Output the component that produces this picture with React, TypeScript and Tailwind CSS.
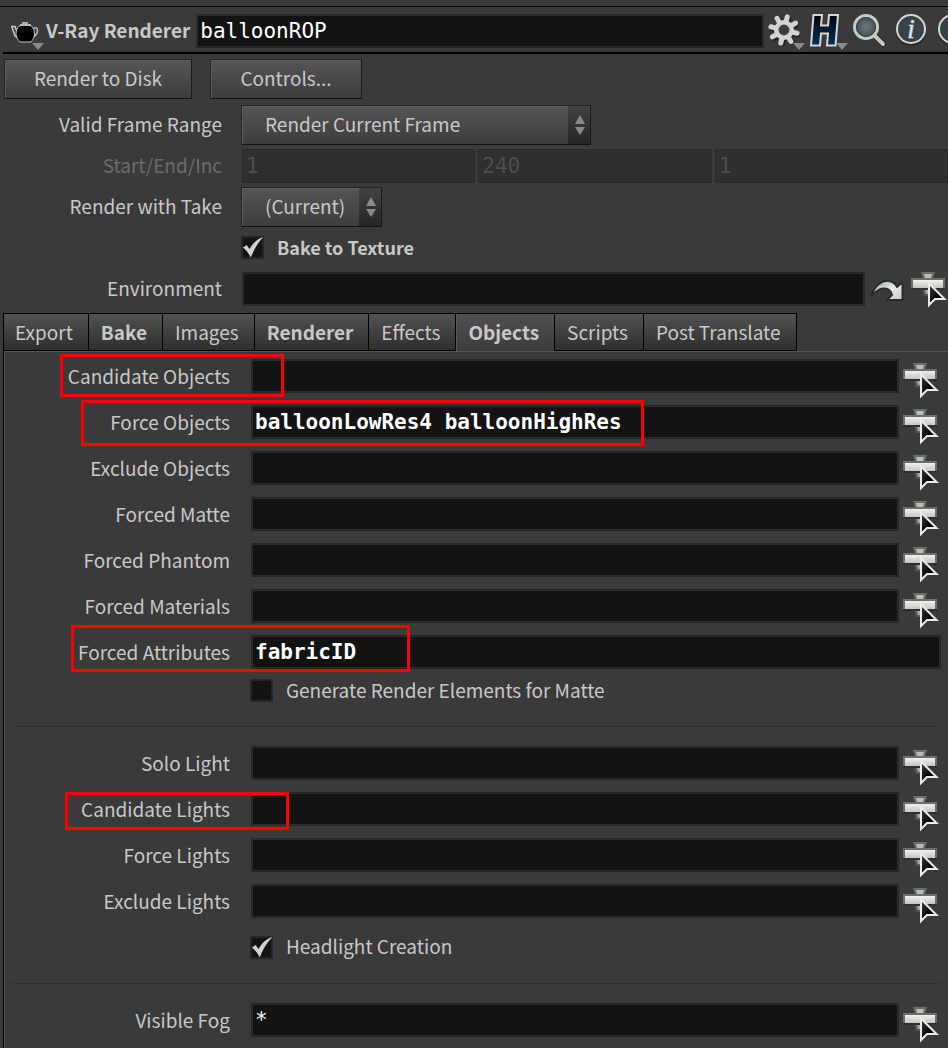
import { useId, useState } from "react";
import type { ReactNode } from "react";

const mono = "font-['DejaVu_Sans_Mono',monospace] text-[21px]";

const fieldBase =
  "h-[34px] min-w-0 flex-1 border border-[#262626] bg-[#131313] pl-[3px] text-white shadow-[inset_0_0_0_1px_#2d2d2d] outline-none";

/* ---------- icons ---------- */

function PickerIcon() {
  return (
    <svg width="36" height="38" viewBox="0 0 36 38" className="block">
      <defs>
        <linearGradient id="bar" x1="0" y1="0" x2="0" y2="1">
          <stop offset="0" stopColor="#f0f0ec" />
          <stop offset="1" stopColor="#c4c6c2" />
        </linearGradient>
        <linearGradient id="cursor" x1="0" y1="0" x2="1" y2="1">
          <stop offset="0" stopColor="#444" />
          <stop offset="0.6" stopColor="#000" />
        </linearGradient>
      </defs>
      <path d="M10 2h14l-2 6H12z" fill="#6b706d" />
      <path d="M13 4h8l-1 4h-6z" fill="#b9bcb7" />
      <path d="M11 19h12l-1 7H13z" fill="#555a58" />
      <path d="M14 20h8v4h-7z" fill="#a9aca7" />
      <rect x="0" y="8" width="34" height="12" fill="#6b706d" />
      <rect x="0" y="18" width="34" height="2" fill="#2c3233" />
      <rect x="2" y="10" width="30" height="8" fill="url(#bar)" />
      <path
        d="M18 13.500v21.500l6-6h9.500z"
        fill="url(#cursor)"
        stroke="#ececec"
        strokeWidth="2"
      />
    </svg>
  );
}

function JumpIcon() {
  return (
    <svg width="36" height="24" viewBox="0 0 36 24" className="block">
      <defs>
        <linearGradient id="jump" x1="0" y1="0" x2="1" y2="1">
          <stop offset="0" stopColor="#8d9293" />
          <stop offset="0.5" stopColor="#e8e8e6" />
          <stop offset="1" stopColor="#c9cbc9" />
        </linearGradient>
      </defs>
      <path
        d="M1 18C5 7 12 2 19 3c4 1 7 3.500 8 6l5.500-5v18H17l5-5c-1-5-5-7-9-6.500-5 .5-8 4-12 7.500z"
        fill="url(#jump)"
        stroke="#262d30"
        strokeWidth="2"
        strokeLinejoin="round"
      />
    </svg>
  );
}

function TeapotIcon() {
  return (
    <svg width="30" height="24" viewBox="0 0 30 24" className="block">
      <path
        d="M1 5.500h4l3 8M2 6l3 9 4 3"
        fill="none"
        stroke="#c8c8c8"
        strokeWidth="1.500"
      />
      <path
        d="M23 8c2.500-2 4.500-1.500 4.500 1.500S25.500 15 22.500 16.500"
        fill="none"
        stroke="#b8b8b8"
        strokeWidth="1.500"
      />
      <path
        d="M9 5c-2 2-3 5-3 8 0 3 2 6 4 8h11c2-2 3.500-5 3.500-8 0-3-1-6-3-8-3-1.500-9.500-1.500-12.500 0z"
        fill="#000"
        stroke="#c8c8c8"
        strokeWidth="1"
      />
      <path d="M12 2h6M10 4h11" stroke="#d0d0d0" strokeWidth="1.500" />
    </svg>
  );
}

function GearIcon() {
  const angles = [0, 45, 90, 135, 180, 225, 270, 315];
  return (
    <svg width="36" height="36" viewBox="0 0 36 36" className="block">
      <g stroke="#222" strokeWidth="6.500" strokeLinecap="round" transform="translate(1 1)">
        {angles.map((a) => (
          <path key={a} d="M17 9V4.500" transform={`rotate(${a + 14} 17 17)`} />
        ))}
      </g>
      <g stroke="#d3d4d1" strokeWidth="5" strokeLinecap="round">
        {angles.map((a) => (
          <path key={a} d="M17 10V3.500" transform={`rotate(${a + 14} 17 17)`} />
        ))}
      </g>
      <circle cx="17" cy="17" r="7.500" fill="#3a3a3a" stroke="#d3d4d1" strokeWidth="5" />
      <circle cx="17" cy="17" r="5" fill="#3a3a3a" stroke="#4a4c4c" strokeWidth="1" />
    </svg>
  );
}

function HoudiniIcon() {
  return (
    <svg width="32" height="36" viewBox="0 0 32 36" className="block">
      <defs>
        <linearGradient id="hfill" x1="0" y1="0" x2="0" y2="1">
          <stop offset="0" stopColor="#02060c" />
          <stop offset="1" stopColor="#04305f" />
        </linearGradient>
      </defs>
      <path
        d="M4.500 2h8.500l-1 10.500h7l1-10.500h9L26.500 32.500h-8.500l1-12h-7l-1 12H2z"
        fill="url(#hfill)"
        stroke="#d8d8d8"
        strokeWidth="2"
      />
    </svg>
  );
}

function SearchIcon() {
  return (
    <svg width="36" height="36" viewBox="0 0 36 36" className="block">
      <defs>
        <radialGradient id="lens">
          <stop offset="0" stopColor="#6d7a80" />
          <stop offset="1" stopColor="#3c494f" />
        </radialGradient>
      </defs>
      <path d="M22 22l9 9" stroke="#222" strokeWidth="6" strokeLinecap="round" />
      <path d="M21 21l10 10" stroke="#c4c6c3" strokeWidth="4" strokeLinecap="round" />
      <circle cx="14" cy="14" r="11.500" fill="url(#lens)" stroke="#c8cac7" strokeWidth="3" />
      <circle cx="14" cy="14" r="9.500" fill="none" stroke="#2f3a3f" strokeWidth="1" />
    </svg>
  );
}

function RoundIcon({ children }: { children?: ReactNode }) {
  return (
    <svg width="32" height="36" viewBox="0 0 32 36" className="block shrink-0">
      <ellipse cx="16" cy="19" rx="15" ry="14" fill="#2a2a2a" />
      <circle cx="16" cy="16" r="14" fill="#36444a" stroke="#d6d8d5" strokeWidth="2" />
      {children}
    </svg>
  );
}

function MenuMark({ className }: { className: string }) {
  return (
    <svg
      width="12"
      height="7"
      viewBox="0 0 12 7"
      className={`pointer-events-none absolute ${className}`}
    >
      <path d="M0 0h12L6 7z" fill="#8b8b8b" />
    </svg>
  );
}

/* ---------- controls ---------- */

function PushButton({ children, className }: { children: ReactNode; className: string }) {
  return (
    <button
      type="button"
      className={`h-10 border border-t-[#232323] border-r-[#1a1a1a] border-b-[#121212] border-l-[#232323] bg-linear-to-b from-[#555555] to-[#3d3d3d] pb-0.5 shadow-[inset_1px_1px_0_#606060] ${className}`}
    >
      {children}
    </button>
  );
}

function Choice({ id, options, className }: { id: string; options: string[]; className: string }) {
  return (
    <div className={`relative h-10 ${className}`}>
      <select
        id={id}
        className="h-10 w-full appearance-none border border-t-[#232323] border-r-[#1a1a1a] border-b-[#121212] border-l-[#232323] bg-linear-to-b from-[#555555] to-[#3d3d3d] pb-0.5 pl-[23px] text-[#c8c8c8] shadow-[inset_1px_1px_0_#606060] outline-none"
      >
        {options.map((o) => (
          <option key={o}>{o}</option>
        ))}
      </select>
      <span className="pointer-events-none absolute top-px right-px bottom-px flex w-[22px] items-center justify-center bg-linear-to-b from-[#434343] to-[#262626] pl-0.5">
        <svg width="10" height="22" viewBox="0 0 10 22">
          <path d="M5 1l5 9H0zM5 21l5-8H0z" fill="#8a8a8a" />
        </svg>
      </span>
    </div>
  );
}

function Tick({ label, bold, checked }: { label: string; bold?: boolean; checked?: boolean }) {
  const [on, setOn] = useState(!!checked);
  return (
    <label className="flex items-center gap-[13px]">
      <span className="relative block size-[23px]">
        <input
          type="checkbox"
          checked={on}
          onChange={(e) => setOn(e.target.checked)}
          className="block size-[23px] appearance-none border-2 border-[#262626] bg-[#131313]"
        />
        {on && (
          <svg
            width="23"
            height="23"
            viewBox="0 0 23 23"
            className="pointer-events-none absolute inset-0"
          >
            <path
              d="M2 11.500L5.500 9l3 4C12 7 16 3 22.500 1c-5 5-9 11-12.500 20H9.500C7.500 17 5 14 2 11.500z"
              fill="#d2d2d2"
            />
          </svg>
        )}
      </span>
      <span className={`pb-0.5 ${bold ? "text-lg font-bold" : ""}`}>{label}</span>
    </label>
  );
}

function TopRow({
  label,
  id,
  dim,
  children,
}: {
  label?: string;
  id?: string;
  dim?: boolean;
  children: ReactNode;
}) {
  return (
    <div className="flex h-[41px] items-center">
      <label
        htmlFor={id}
        className={`w-[222px] shrink-0 pb-px text-right ${dim ? "text-[#6c6c6c]" : ""}`}
      >
        {label}
      </label>
      <div className="ml-[19px] flex min-w-0 flex-1 items-center">{children}</div>
    </div>
  );
}

function ParamRow({
  label,
  value = "",
  bold,
  picker = true,
  mark,
}: {
  label: string;
  value?: string;
  bold?: boolean;
  picker?: boolean;
  mark?: string;
}) {
  const id = useId();
  return (
    <div className="relative flex h-[46px] items-center pr-[7px]">
      <label htmlFor={id} className="w-[225px] shrink-0 pb-px text-right">
        {label}
      </label>
      <input
        id={id}
        defaultValue={value}
        className={`ml-[21px] ${fieldBase} ${mono} ${bold ? "font-bold" : ""}`}
      />
      {picker && (
        <button type="button" aria-label={`Choose ${label}`} className="mr-0.5 ml-1 pt-2">
          <PickerIcon />
        </button>
      )}
      {mark && (
        <span className={`pointer-events-none absolute z-10 border-3 border-[#ff0000] ${mark}`} />
      )}
    </div>
  );
}

function Rule() {
  return <hr className="my-[13px] mr-2 ml-[7px] h-px border-0 bg-[#303030]" />;
}

const tabs = [
  { name: "Export" },
  { name: "Bake", bold: true },
  { name: "Images" },
  { name: "Renderer", bold: true },
  { name: "Effects" },
  { name: "Objects", bold: true, active: true },
  { name: "Scripts" },
  { name: "Post Translate" },
];

export default function App() {
  return (
    <main className="flex min-h-screen flex-col overflow-hidden bg-[#3a3a3a] pt-[6px] font-['Noto_Sans_CJK_SC',sans-serif] text-[19px] leading-6 text-[#c8c8c8]">
      <header className="flex h-[46px] items-center border-t border-black pt-0.5 pl-[10px]">
        <button type="button" aria-label="Node type" className="relative h-9 w-9 shrink-0 pt-1">
          <TeapotIcon />
          <MenuMark className="-bottom-px left-[22px]" />
        </button>
        <label htmlFor="node" className="shrink-0 pb-px font-bold">
          V-Ray Renderer
        </label>
        <input
          id="node"
          defaultValue="balloonROP"
          className={`ml-[6px] ${fieldBase} ${mono}`}
        />
        <div className="ml-[3px] flex shrink-0 items-center">
          <button type="button" aria-label="Settings" className="relative">
            <GearIcon />
            <MenuMark className="-right-0.5 -bottom-px" />
          </button>
          <button type="button" aria-label="Houdini" className="relative ml-[6px]">
            <HoudiniIcon />
            <MenuMark className="-right-[7px] -bottom-px" />
          </button>
          <button type="button" aria-label="Search" className="ml-[11px]">
            <SearchIcon />
          </button>
          <button type="button" aria-label="Information" className="ml-[7px]">
            <RoundIcon>
              <text
                x="16"
                y="25"
                textAnchor="middle"
                fontSize="27"
                fontWeight="400"
                fontStyle="italic"
                fontFamily="Liberation Serif, serif"
                fill="#e2e2e0"
                stroke="#e2e2e0"
                strokeWidth="0.500"
              >
                i
              </text>
            </RoundIcon>
          </button>
          <button type="button" aria-label="Help" className="ml-[10px] w-[11px] overflow-hidden">
            <RoundIcon />
          </button>
        </div>
      </header>
      <div className="ml-[3px] h-[2px] bg-black" />

      <div className="mt-[5px] mb-[5px] flex gap-[18px] pl-1">
        <PushButton className="w-[188px]">Render to Disk</PushButton>
        <PushButton className="w-[152px]">Controls...</PushButton>
      </div>

      <TopRow label="Valid Frame Range" id="range">
        <Choice
          id="range"
          options={["Render Current Frame", "Render Frame Range"]}
          className="w-[350px]"
        />
      </TopRow>
      <TopRow label="Start/End/Inc" id="start" dim>
        <div className="grid flex-1 grid-cols-3 gap-[3px] pl-px">
          {["1", "240", "1"].map((v, i) => (
            <input
              key={i}
              id={i === 0 ? "start" : undefined}
              aria-label={["Start", "End", "Increment"][i]}
              defaultValue={v}
              disabled
              className={`h-[34px] min-w-0 border border-[#2b2b2b] bg-[#2f2f2f] pl-[3px] text-[#4e4e4e] ${mono}`}
            />
          ))}
        </div>
      </TopRow>
      <TopRow label="Render with Take" id="take">
        <Choice id="take" options={["(Current)", "Main"]} className="w-[141px]" />
      </TopRow>
      <TopRow>
        <Tick label="Bake to Texture" bold checked />
      </TopRow>
      <TopRow label="Environment" id="env">
        <input id="env" className={`ml-px ${fieldBase} ${mono}`} />
        <button type="button" aria-label="Jump to operator" className="ml-[5px] pt-0.5">
          <JumpIcon />
        </button>
        <button type="button" aria-label="Choose environment" className="mr-px ml-[5px]">
          <PickerIcon />
        </button>
      </TopRow>

      <nav className="mt-1 ml-[3px] flex" role="tablist">
        {tabs.map((t, i) => (
          <button
            key={t.name}
            type="button"
            role="tab"
            aria-selected={!!t.active}
            className={`h-[38px] border-t border-r border-black bg-linear-to-b pr-[15px] ${
              i === 0 ? "border-l pl-[11px]" : "pl-[12px]"
            } ${
              t.active
                ? "from-[#505050] to-[#3c3c3c] pb-px shadow-[inset_1px_0_0_#5a5a5a]"
                : "border-b from-[#525252] to-[#2f2f2f]"
            } ${t.bold ? "font-bold" : ""}`}
          >
            {t.name}
          </button>
        ))}
      </nav>

      <section className="ml-[3px] flex flex-1 flex-col border-l border-black">
        <div className="flex-1 border-t border-l border-[#555555] pt-px">
          <ParamRow label="Candidate Objects" mark="top-px left-[55px] h-[43px] w-[224px]" />
          <ParamRow
            label="Force Objects"
            value="balloonLowRes4 balloonHighRes"
            bold
            mark="top-px left-[76px] h-[46px] w-[563px]"
          />
          <ParamRow label="Exclude Objects" />
          <ParamRow label="Forced Matte" />
          <ParamRow label="Forced Phantom" />
          <ParamRow label="Forced Materials" />
          <ParamRow
            label="Forced Attributes"
            value="fabricID"
            bold
            picker={false}
            mark="-top-1 left-[66px] h-[47px] w-[339px]"
          />
          <div className="flex h-[38px] items-center pb-[7px] pl-[245px]">
            <Tick label="Generate Render Elements for Matte" />
          </div>
          <Rule />
          <ParamRow label="Solo Light" />
          <ParamRow label="Candidate Lights" mark="top-[6px] left-[60px] h-[38px] w-[224px]" />
          <ParamRow label="Force Lights" />
          <ParamRow label="Exclude Lights" />
          <div className="flex h-[46px] items-center pl-[245px]">
            <Tick label="Headlight Creation" checked />
          </div>
          <Rule />
          <ParamRow label="Visible Fog" value="*" />
        </div>
      </section>
    </main>
  );
}
